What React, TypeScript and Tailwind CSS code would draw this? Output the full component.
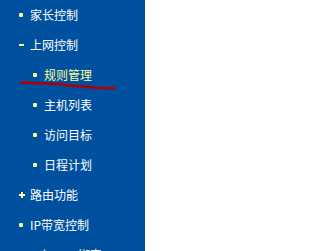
const items: { label: string; level: 0 | 1; icon: "dot" | "minus" | "plus"; active?: boolean }[] = [
  { label: "家长控制", level: 0, icon: "dot" },
  { label: "上网控制", level: 0, icon: "minus" },
  { label: "规则管理", level: 1, icon: "dot", active: true },
  { label: "主机列表", level: 1, icon: "dot" },
  { label: "访问目标", level: 1, icon: "dot" },
  { label: "日程计划", level: 1, icon: "dot" },
  { label: "路由功能", level: 0, icon: "plus" },
  { label: "IP带宽控制", level: 0, icon: "dot" },
  { label: "IP与MAC绑定", level: 0, icon: "dot" },
];

function Icon({ kind }: { kind: "dot" | "minus" | "plus" }) {
  if (kind === "minus") return <span className="block h-[2px] w-[5px] bg-[#ffff99]" />;
  if (kind === "plus")
    return (
      <svg width="6" height="6" viewBox="0 0 6 6" className="block">
        <rect x="2" y="0" width="2" height="6" fill="#ffff99" />
        <rect x="0" y="2" width="6" height="2" fill="#ffff99" />
      </svg>
    );
  return <span className="block h-[4px] w-[4px] rounded-[1px] bg-[#ffff99]" />;
}

export default function App() {
  return (
    <div className="relative flex h-[251px] w-[209px] overflow-hidden bg-white font-['Noto_Sans_CJK_SC',sans-serif] text-[12px]">
      <nav className="w-[145px] shrink-0 bg-[#0050a0]">
        {items.map((item) => (
          <div
            key={item.label}
            className={`flex h-[30px] items-center ${item.level === 1 ? "pl-[33px]" : "pl-[19px]"}`}
          >
            <span className="flex w-[11px] items-center">
              <Icon kind={item.icon} />
            </span>
            <span className={`leading-none ${item.active ? "text-[#ffff99]" : "text-white"}`}>{item.label}</span>
          </div>
        ))}
      </nav>

      {/* 手绘红线标注 */}
      <svg className="pointer-events-none absolute left-0 top-0" width="209" height="251" viewBox="0 0 209 251">
        <path
          d="M21 82.5 L42 83.5 L60 84 L68 85.5 L83 86.5 L100 88 L115 88.5"
          fill="none"
          stroke="#b00000"
          strokeWidth="2.5"
          strokeLinecap="round"
          strokeLinejoin="round"
        />
      </svg>
    </div>
  );
}
